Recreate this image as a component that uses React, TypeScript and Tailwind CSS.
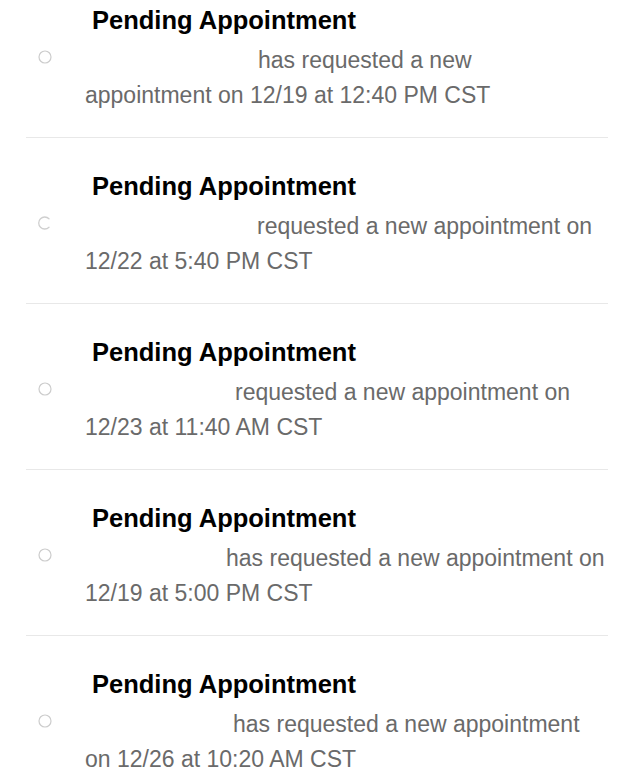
import React from "react";

type Item = { indent: number; line1: string; line2: string; partial?: boolean };

const items: Item[] = [
  { indent: 173, line1: "has requested a new", line2: "appointment on 12/19 at 12:40 PM CST" },
  { indent: 172, line1: "requested a new appointment on", line2: "12/22 at 5:40 PM CST", partial: true },
  { indent: 150, line1: "requested a new appointment on", line2: "12/23 at 11:40 AM CST" },
  { indent: 141, line1: "has requested a new appointment on", line2: "12/19 at 5:00 PM CST" },
  { indent: 148, line1: "has requested a new appointment", line2: "on 12/26 at 10:20 AM CST" },
];

function Dot({ partial }: { partial?: boolean }) {
  if (partial) {
    return (
      <svg width="14" height="14" viewBox="0 0 14 14" fill="none">
        <path d="M11 2.8 A6 6 0 1 0 11 11.2" stroke="#cfcfcf" strokeWidth="1.3" strokeLinecap="round" />
      </svg>
    );
  }
  return (
    <svg width="14" height="14" viewBox="0 0 14 14" fill="none">
      <circle cx="7" cy="7" r="6" stroke="#cccccc" strokeWidth="1.2" />
    </svg>
  );
}

export default function App() {
  return (
    <div
      className="w-[635px] h-[782px] overflow-hidden bg-white"
      style={{ fontFamily: '"Liberation Sans", Arial, sans-serif' }}
    >
      <div className="-mt-[28px] flex flex-col">
        {items.map((it, i) => (
          <div key={i} className="mx-[26px] w-[582px] border-b border-[#e8e8e8] pt-[33px] pb-[24px] flex">
            <div className="w-[59px] shrink-0 pl-[12px] pt-[45px]">
              <Dot partial={it.partial} />
            </div>
            <div className="flex flex-col">
              <div className="pl-[7px] text-[25.5px] leading-[30px] font-bold text-black whitespace-nowrap">
                Pending Appointment
              </div>
              <div className="mt-[8px] text-[23px] leading-[35px] text-[#6a6a6a] whitespace-nowrap">
                <div style={{ paddingLeft: it.indent }}>{it.line1}</div>
                <div>{it.line2}</div>
              </div>
            </div>
          </div>
        ))}
      </div>
    </div>
  );
}
